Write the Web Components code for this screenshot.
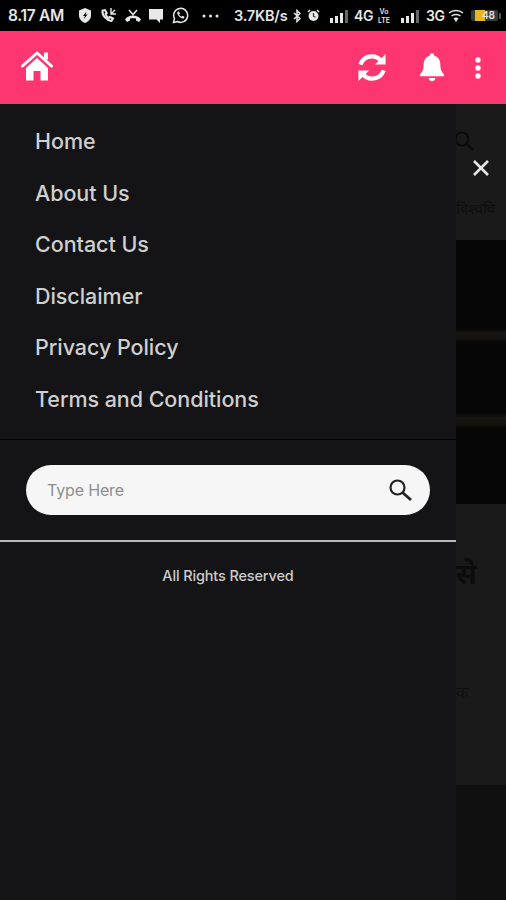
<!DOCTYPE html>
<html>
<head>
<meta charset="utf-8">
<title>Menu</title>
<style>
  html, body { margin: 0; padding: 0; background: #141416; }
  body { width: 506px; height: 900px; overflow: hidden; font-family: "Inter", "Liberation Sans", sans-serif; }
</style>
</head>
<body>
<phone-screen>
  <status-bar slot="status"></status-bar>
  <app-bar slot="bar"></app-bar>
  <side-drawer slot="drawer">
    <menu-link>Home</menu-link>
    <menu-link>About Us</menu-link>
    <menu-link>Contact Us</menu-link>
    <menu-link>Disclaimer</menu-link>
    <menu-link>Privacy Policy</menu-link>
    <menu-link>Terms and Conditions</menu-link>
  </side-drawer>
  <dim-page slot="page"></dim-page>
</phone-screen>

<script>
class PhoneScreen extends HTMLElement {
  constructor() {
    super();
    this.attachShadow({ mode: 'open' }).innerHTML = `
      <style>
      :host { display: flex; flex-direction: column; width: 506px; height: 900px; }
      .under { flex: 1; display: flex; min-height: 0; }
      </style>
      <slot name="status"></slot>
      <slot name="bar"></slot>
      <div class="under">
        <slot name="drawer"></slot>
        <slot name="page"></slot>
      </div>`;
  }
}

class StatusBar extends HTMLElement {
  constructor() {
    super();
    const bars = `<svg width="20" height="14" viewBox="0 0 20 14"><g fill="#e8e8e8"><rect x="0" y="9" width="3" height="5"/><rect x="5" y="7" width="3" height="7"/><rect x="10" y="4" width="3" height="10"/></g><rect x="15" y="1" width="3" height="13" fill="#666"/></svg>`;
    this.attachShadow({ mode: 'open' }).innerHTML = `
      <style>
      :host { display: flex; align-items: center; height: 31px; background: #000; color: #e6e6e6;
        font: 600 15.500px "Inter", "Liberation Sans", sans-serif; padding: 0 0 0 8px; box-sizing: border-box; white-space: nowrap; }
      svg { display: block; flex: none; }
      .time { width: 62px; letter-spacing: -.3px; }
      .net { letter-spacing: -.2px; font-size: 14.500px; }
      .g { font-size: 14px; letter-spacing: -.3px; width: 18px; }
      .volte { font-size: 7px; line-height: 9px; width: 16px; text-align: center; font-weight: 600; }
      .batt { position: relative; width: 27px; height: 11px; border-radius: 2px; background: #3a3a3a; font-size: 10px; line-height: 11px; text-align: right; padding-right: 3px; box-sizing: border-box; overflow: hidden; }
      .batt i { position: absolute; left: 4px; top: 0; bottom: 0; width: 10px; background: #e8b820; }
      .batt b { position: relative; font-weight: 600; }
      .tip { width: 2px; height: 6px; background: #555; margin-left: 1px; }
      </style>
      <span class="time">8.17 AM</span>
      <svg style="margin-left:8px" width="14" height="15" viewBox="0 0 14 15"><path fill="#e8e8e8" d="M7 0l6 2.500v5c0 3.500-2.600 6-6 7.500-3.400-1.500-6-4-6-7.500v-5z"/><path fill="#000" d="M8.500 3.500L5 8h2l-1.500 3.500L9.500 6.500h-2z"/></svg>
      <svg style="margin-left:8px" width="17" height="17" viewBox="0 0 17 17"><path fill="none" stroke="#e8e8e8" stroke-width="2" d="M2.500 3.500c-.5 5 4 10 9 10.500l1.500-2.500-3-1.500-1.200 1C7 10 6 8.500 5.500 7l1.200-1L5 3z"/><path fill="none" stroke="#e8e8e8" stroke-width="1.400" d="M11 1v6h5M11 7l4-4"/></svg>
      <svg style="margin-left:8px" width="16" height="13" viewBox="0 0 16 13"><path fill="none" stroke="#e8e8e8" stroke-width="1.500" d="M4 1l4 4.500L12 1"/><path fill="#e8e8e8" d="M0 10.500C2 7.500 5 6.500 8 6.500s6 1 8 4L14 13l-3-1.500v-2C9 9 7 9 5 9.500v2L2 13z"/></svg>
      <svg style="margin-left:8px" width="14" height="14" viewBox="0 0 14 14"><path fill="#e8e8e8" d="M0 0h14v10.500h-3V14L7.500 10.500H0z"/></svg>
      <svg style="margin-left:9px" width="17" height="17" viewBox="0 0 17 17"><path fill="none" stroke="#e8e8e8" stroke-width="1.500" d="M1.500 15.500l1-3.800A7 7 0 1 1 5.300 14.500z"/><path fill="#e8e8e8" d="M5.500 4.800l1.500-.3 1 2-1 1c.5 1 1.300 1.800 2.400 2.300l1-1 2 1-.3 1.500c-3 1.200-7.800-3.500-6.600-6.500z"/></svg>
      <svg style="margin-left:13px" width="17" height="4" viewBox="0 0 17 4"><g fill="#e8e8e8"><circle cx="2" cy="2" r="1.500"/><circle cx="8.500" cy="2" r="1.500"/><circle cx="15" cy="2" r="1.500"/></g></svg>
      <span class="net" style="margin-left:15px;width:55px">3.7KB/s</span>
      <svg style="margin-left:4px" width="8" height="14" viewBox="0 0 8 14"><path fill="none" stroke="#e8e8e8" stroke-width="1.500" d="M1 4l6 5.500L4 12.500v-11L7 4.500 1 10"/></svg>
      <svg style="margin-left:6px" width="13" height="13" viewBox="0 0 13 13"><circle cx="6.500" cy="7" r="5" fill="#e8e8e8"/><path fill="none" stroke="#333" stroke-width="1.200" d="M6.500 4v3.200l2 1"/><path stroke="#e8e8e8" stroke-width="1.500" d="M1 3l2-2M12 3l-2-2"/></svg>
      <span style="margin-left:10px">${bars}</span>
      <span class="g" style="margin-left:4px">4G</span>
      <span class="volte" style="margin-left:4px">Vo<br>LTE</span>
      <span style="margin-left:9px">${bars}</span>
      <span class="g" style="margin-left:5px">3G</span>
      <svg style="margin-left:4px" width="16" height="13" viewBox="0 0 16 13"><g fill="none" stroke="#e8e8e8" stroke-width="1.500"><path d="M1 4c4-3.500 10-3.500 14 0"/><path d="M3.500 7c2.500-2 6.500-2 9 0"/></g><path fill="#e8e8e8" d="M5.500 9.300c1.500-1 3.500-1 5 0L8 13z"/></svg>
      <span class="batt" style="margin-left:7px"><i></i><b>48</b></span><span class="tip"></span>`;
  }
}

class AppBar extends HTMLElement {
  constructor() {
    super();
    this.attachShadow({ mode: 'open' }).innerHTML = `
      <style>
      :host { display: flex; align-items: center; height: 73px; background: #fd3570; padding: 0 25px 0 21px; box-sizing: border-box; }
      svg { display: block; flex: none; }
      .push { flex: 1; }
      </style>
      <svg width="32" height="30" viewBox="0 0 32 30" style="margin-bottom:3px"><path fill="none" stroke="#fff" stroke-width="3" stroke-linecap="round" stroke-linejoin="round" d="M1.500 15L16 2l14.500 13"/><rect x="23" y="1.500" width="4" height="7" fill="#fff"/><path fill="#fff" fill-rule="evenodd" d="M16 7l11 10v12.500H5V17zM12.500 20v9.500h7V20z"/></svg>
      <span class="push"></span>
      <svg width="30" height="31" viewBox="0 0 30 32"><g fill="none" stroke="#fff" stroke-width="4.500"><path d="M3 13C5 7 10 4.500 15 4.500c4.500 0 7.500 2 9.500 5"/><path d="M27 19c-2 6-7 8.500-12 8.500-4.500 0-7.500-2-9.500-5"/></g><path fill="#fff" d="M29 2v11H18zM1 30V19h11z"/></svg>
      <svg width="24" height="29" viewBox="0 0 26 31" style="margin-left:33px"><path fill="#fff" d="M13 0c1.500 0 2.500 1 2.500 2.700 4.500 1.200 6.500 5 6.500 9.300 0 5 1 8 4 11v2H0v-2c3-3 4-6 4-11 0-4.300 2-8.100 6.500-9.300C10.500 1 11.500 0 13 0z"/><path fill="#fff" d="M9.500 27h7c0 2-1.500 3.500-3.500 3.500S9.500 29 9.500 27z"/></svg>
      <svg width="6" height="22" viewBox="0 0 6 22" style="margin-left:31px"><g fill="#fff"><circle cx="3" cy="3" r="2.700"/><circle cx="3" cy="11" r="2.700"/><circle cx="3" cy="19" r="2.700"/></g></svg>`;
  }
}

class MenuLink extends HTMLElement {
  constructor() {
    super();
    this.attachShadow({ mode: 'open' }).innerHTML = `
      <style>
      :host { display: block; height: 51.500px; padding-left: 35px; color: #cfcfcf;
        font: 500 21.500px/51.500px "Inter", "Liberation Sans", sans-serif; white-space: nowrap; letter-spacing: -.05px; }
      </style>
      <slot></slot>`;
  }
}

class SearchBox extends HTMLElement {
  constructor() {
    super();
    this.attachShadow({ mode: 'open' }).innerHTML = `
      <style>
      :host { display: flex; align-items: center; height: 50px; margin: 0 26px; border-radius: 25px; background: #f6f6f6;
        padding: 0 18px 0 21px; box-sizing: border-box; color: #8d8d8d; font: 400 16px "Inter", "Liberation Sans", sans-serif; letter-spacing: -.15px; }
      span { flex: 1; }
      svg { display: block; }
      </style>
      <span>Type Here</span>
      <svg width="24" height="24" viewBox="0 0 24 24"><circle cx="9.500" cy="9.500" r="7" fill="none" stroke="#222" stroke-width="2.200"/><path stroke="#222" stroke-width="2.800" d="M14.500 14.500L23 22"/></svg>`;
  }
}

class SideDrawer extends HTMLElement {
  constructor() {
    super();
    this.attachShadow({ mode: 'open' }).innerHTML = `
      <style>
      :host { display: flex; flex-direction: column; width: 456px; flex: none; background: #141416; padding-top: 12px; box-sizing: border-box; }
      hr { border: 0; margin: 0; }
      .thin { height: 1px; background: #050506; margin-top: 14px; margin-bottom: 25px; }
      .line { height: 2px; background: #b9b9b9; margin-top: 25px; }
      .rights { text-align: center; color: #cdcdcd; font: 500 14.500px "Inter", "Liberation Sans", sans-serif; letter-spacing: -.15px; margin-top: 25px; }
      </style>
      <slot></slot>
      <hr class="thin">
      <search-box></search-box>
      <hr class="line">
      <div class="rights">All Rights Reserved</div>`;
  }
}

class DimPage extends HTMLElement {
  constructor() {
    super();
    this.attachShadow({ mode: 'open' }).innerHTML = `
      <style>
      :host { display: flex; flex-direction: column; flex: 1; position: relative; background: #1a1a1a; overflow: hidden; color: #0c0c0c; font-family: "Noto Sans", "Noto Sans CJK SC", "DejaVu Sans", sans-serif; }
      .top { height: 136px; }
      .photo { height: 276px; background: #070606; display: flex; flex-direction: column; }
      .photo div { flex: none; }
      .band { background: linear-gradient(#070606, #171613 30%, #141310 70%, #070606); }
      .rest { background: #1a1a1a; }
      .mid { flex: 1; }
      .foot { height: 115px; background: #111010; }
      .glass { position: absolute; left: -2px; top: 27px; }
      .close { position: absolute; left: 16px; top: 55px; }
      .small { position: absolute; left: 0; top: 94px; font-size: 15px; color: #101010; white-space: nowrap; }
      .big { position: absolute; left: 0; top: 450px; font-size: 28px; font-weight: 700; white-space: nowrap; }
      .low { position: absolute; left: 0; top: 577px; font-size: 16px; color: #101010; white-space: nowrap; }
      </style>
      <div class="top"></div>
      <div class="photo">
        <div style="height:89px"></div>
        <div class="band" style="height:13px"></div>
        <div style="height:71px"></div>
        <div class="band" style="height:15px"></div>
        <div style="height:76px"></div>
        <div class="rest" style="height:12px"></div>
      </div>
      <div class="mid"></div>
      <div class="foot"></div>
      <svg class="glass" width="20" height="20" viewBox="0 0 20 20"><circle cx="8" cy="8" r="6.500" fill="none" stroke="#0a0a0a" stroke-width="2"/><path stroke="#0a0a0a" stroke-width="2" d="M13 13l6 6"/></svg>
      <span class="small">विश्ववि</span>
      <span class="big">से</span>
      <span class="low">क</span>
      <svg class="close" width="18" height="18" viewBox="0 0 18 18"><path stroke="#e8e8e8" stroke-width="2.600" d="M2 2l14 14M16 2L2 16"/></svg>`;
  }
}

customElements.define('phone-screen', PhoneScreen);
customElements.define('status-bar', StatusBar);
customElements.define('app-bar', AppBar);
customElements.define('menu-link', MenuLink);
customElements.define('search-box', SearchBox);
customElements.define('side-drawer', SideDrawer);
customElements.define('dim-page', DimPage);
</script>
</body>
</html>
